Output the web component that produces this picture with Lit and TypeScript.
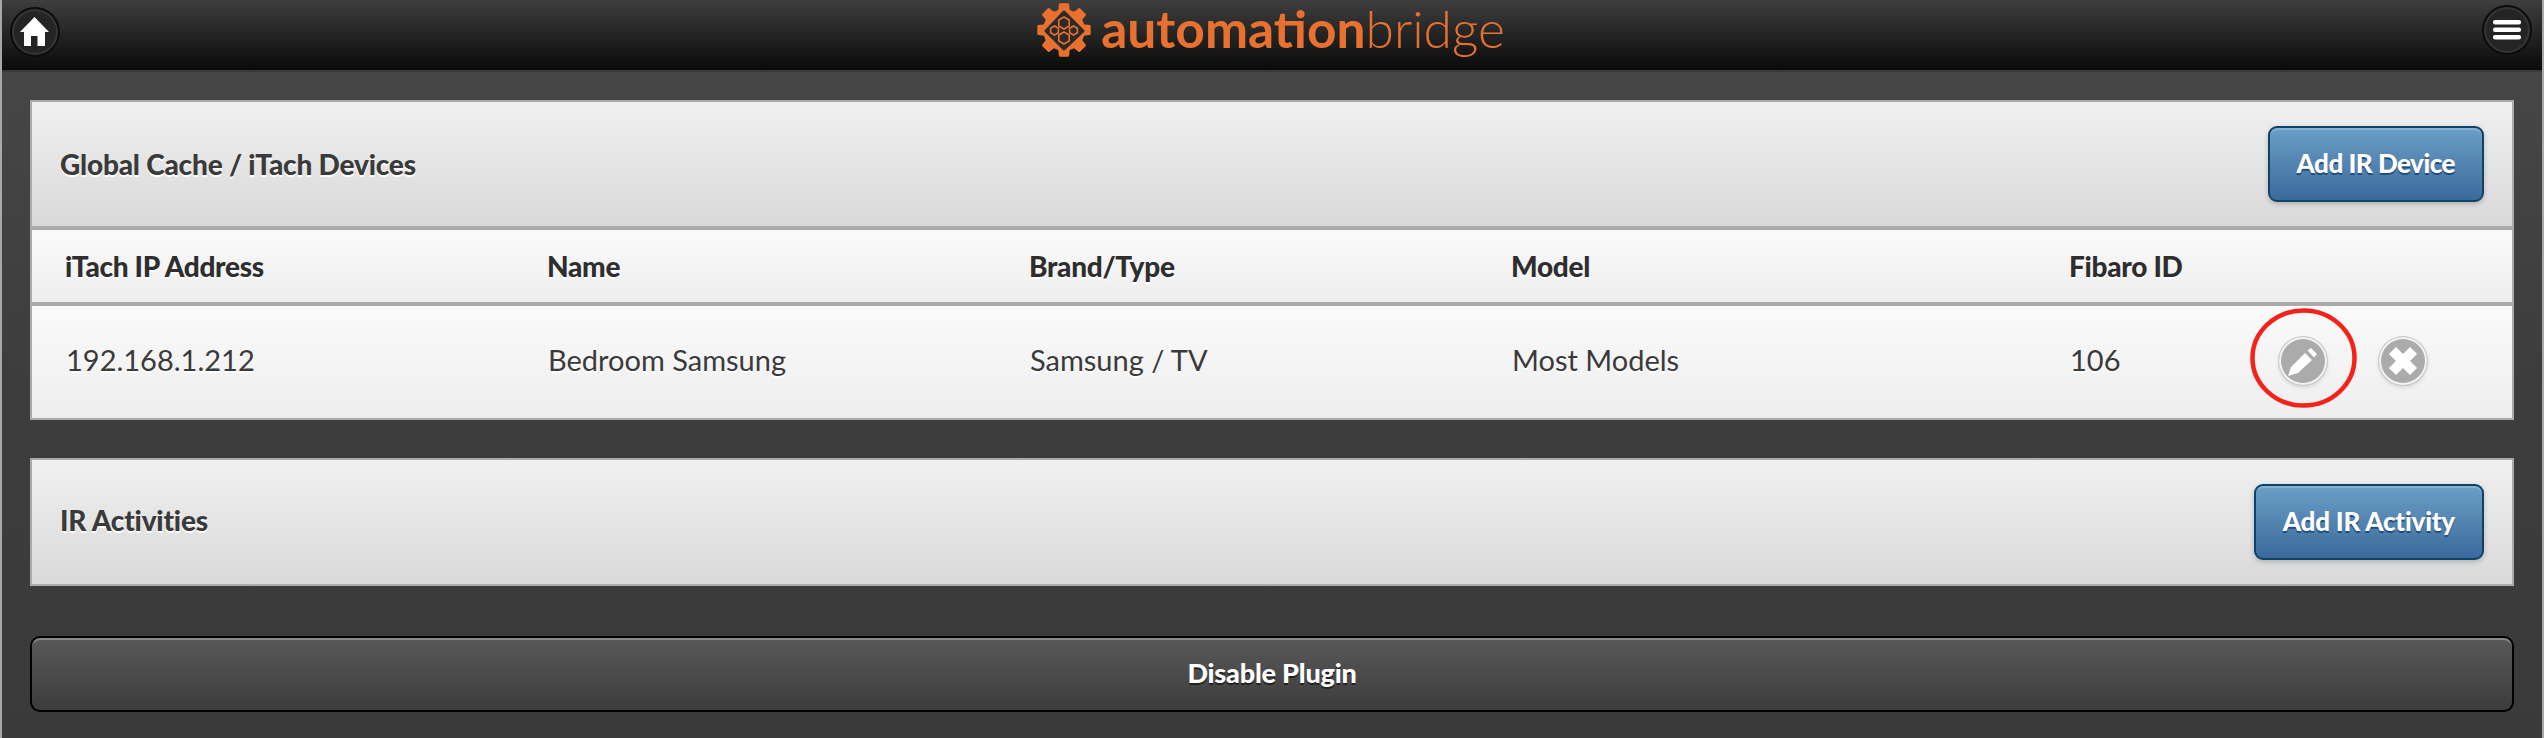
import { LitElement, html, css } from 'lit';
import { customElement } from 'lit/decorators.js';

// gear outline for the logo, 8 teeth
function gearPath(cx: number, cy: number, outer: number, inner: number, teeth: number) {
  const pts: string[] = [];
  const step = (Math.PI * 2) / teeth;
  for (let i = 0; i < teeth; i++) {
    const a = i * step - Math.PI / 2;
    const list: [number, number][] = [
      [a - step * 0.31, inner],
      [a - step * 0.2, outer],
      [a + step * 0.2, outer],
      [a + step * 0.31, inner],
    ];
    for (const [ang, r] of list) {
      pts.push(`${(cx + Math.cos(ang) * r).toFixed(2)} ${(cy + Math.sin(ang) * r).toFixed(2)}`);
    }
  }
  return 'M' + pts.join('L') + 'Z';
}

function hexPath(cx: number, cy: number, r: number) {
  const h = r * 0.87;
  return `M${cx} ${cy - r}L${cx + h} ${cy - r / 2}V${cy + r / 2}L${cx} ${cy + r}L${cx - h} ${cy + r / 2}V${cy - r / 2}Z`;
}

const columns = ['iTach IP Address', 'Name', 'Brand/Type', 'Model', 'Fibaro ID', ''];
const device = ['192.168.1.212', 'Bedroom Samsung', 'Samsung / TV', 'Most Models', '106'];

@customElement('app-root')
export class AppRoot extends LitElement {
  static styles = css`
    :host {
      display: block;
      width: 2544px;
      height: 738px;
      overflow: hidden;
      box-sizing: border-box;
      border-left: 2px solid #a8a8a8;
      border-right: 2px solid #a8a8a8;
      font-family: "Lato", "Open Sans", sans-serif;
      background: #3c3c3c;
    }

    .topbar {
      height: 72px;
      box-sizing: border-box;
      border-bottom: 2px solid #3a3a3a;
      background: linear-gradient(180deg, #3e3e3e 0%, #0a0a0a 100%);
      display: flex;
      align-items: center;
      justify-content: space-between;
      padding: 0 10px 6px 8px;
    }

    .round {
      width: 50px;
      height: 50px;
      box-sizing: border-box;
      border-radius: 50%;
      background: #242424;
      border: 2px solid #0d0d0d;
      box-shadow: inset 0 0 0 2px #363636;
      display: flex;
      align-items: center;
      justify-content: center;
    }

    .round.menu {
      margin-top: -4px;
    }

    .logo {
      display: flex;
      align-items: center;
      gap: 10px;
      color: #e87130;
      font-size: 51.5px;
      line-height: 52px;
      margin: -4px 0 0 0;
    }

    .logo svg {
      display: block;
    }

    .logo .word {
      margin-bottom: 5px;
    }

    .logo b {
      font-weight: 700;
    }

    .logo span {
      font-weight: 300;
    }

    .content {
      height: 666px;
      box-sizing: border-box;
      padding: 28px 28px 0 28px;
      background: linear-gradient(180deg, #464646 0%, #3d3d3d 45%, #3a3a3a 100%);
      display: flex;
      flex-direction: column;
    }

    .panel {
      border: 2px solid #aaa;
      color: #3a3a3a;
      margin-bottom: 38px;
    }

    .panel-head {
      display: flex;
      align-items: center;
      justify-content: space-between;
      padding: 0 28px;
      height: 124px;
      background: linear-gradient(180deg, #f0f0f0 0%, #d9d9d9 100%);
      font-size: 28px;
      font-weight: 900;
      letter-spacing: -0.2px;
      text-shadow: 0 2px 0 #fff;
    }

    .panel-head .lift {
      margin-bottom: 4px;
    }

    .add {
      height: 76px;
      box-sizing: border-box;
      padding: 0 27px 3px;
      border: 2px solid #0c4468;
      border-radius: 9px;
      background: linear-gradient(180deg, #6a9fc6 0%, #3c699b 100%);
      box-shadow: inset 0 2px 0 rgba(255, 255, 255, 0.2), 0 2px 5px rgba(0, 0, 0, 0.2);
      color: #fff;
      font-family: inherit;
      font-size: 26px;
      font-weight: 900;
      letter-spacing: -0.5px;
      text-shadow: 0 2px 0 #1f4d7c;
    }

    .add.wide {
      letter-spacing: -0.2px;
    }

    .row {
      display: grid;
      grid-template-columns: 482px 482px 482px 558px 210px 1fr;
      align-items: center;
      padding-left: 33px;
    }

    .row.heads {
      height: 72px;
      border-top: 4px solid #aaa;
      border-bottom: 4px solid #aaa;
      background: linear-gradient(180deg, #fafafa 0%, #eee 100%);
      font-size: 28px;
      font-weight: 900;
      letter-spacing: -0.3px;
      color: #2e2e2e;
      text-shadow: 0 2px 0 #fff;
    }

    .row.data {
      height: 112px;
      background: linear-gradient(180deg, #fafafa 0%, #eee 100%);
      font-size: 29px;
      color: #3a3a3a;
      text-shadow: 0 2px 0 #fff;
    }

    .row.data > div {
      padding: 0 0 5px 1px;
    }

    .disable {
      height: 76px;
      margin-top: 12px;
      padding-bottom: 4px;
      box-sizing: border-box;
      border: 2px solid #000;
      border-radius: 10px;
      background: linear-gradient(180deg, #595959 0%, #3c3c3c 100%);
      box-shadow: inset 0 3px 0 -1px #8a8a8a;
      color: #fff;
      font-family: inherit;
      font-size: 27px;
      font-weight: 900;
      letter-spacing: -0.2px;
      text-shadow: 0 2px 0 #222;
    }

    .row.data > .actions {
      position: relative;
      display: flex;
      gap: 52px;
      margin-top: -2px;
      padding: 0;
    }

    .act {
      width: 48px;
      height: 48px;
      flex: none;
      border-radius: 50%;
      background: #ababab;
      box-shadow: inset 0 0 0 2px #f4f4f4, 0 0 0 1px #c8c8c8, 0 2px 4px rgba(0, 0, 0, 0.15);
    }

    .act svg {
      display: block;
    }

    .ring {
      position: absolute;
      left: -29px;
      top: -29px;
      pointer-events: none;
    }
  `;

  render() {
    return html`
      <div class="topbar">
        <div class="round">
          <svg width="30" height="30" viewBox="0 0 30 30"><path fill="#fff" d="M14.5 0 L29 15 L25 15 L25 29 L17.5 29 L17.5 19 L11 19 L11 29 L4 29 L4 15 L0 15 Z"/></svg>
        </div>
        <div class="logo">
          <svg width="54" height="54" viewBox="0 0 54 54">
            <path fill="#e87130" stroke="#e87130" stroke-width="2" stroke-linejoin="round" d=${gearPath(27, 27, 26, 20, 8)}/>
            <path fill="#2a2a2a" stroke="#2a2a2a" stroke-width="3" stroke-linejoin="round" d="M27 9 L46 28 L27 46 L9 28 Z"/>
            <g fill="#2a2a2a" stroke="#e87130" stroke-width="1.6">
              <path d=${hexPath(17.5, 27.5, 4.5)}/>
              <path d=${hexPath(36.5, 27.5, 4.5)}/>
              <path d=${hexPath(27, 20, 6)}/>
              <path d=${hexPath(27, 35, 6)}/>
            </g>
          </svg>
          <div class="word"><b>automation</b><span>bridge</span></div>
        </div>
        <div class="round menu">
          <svg width="28" height="20" viewBox="0 0 28 20"><g fill="#fff"><rect y="0" width="28" height="4.5" rx="2"/><rect y="7.5" width="28" height="4.5" rx="2"/><rect y="15" width="28" height="4.5" rx="2"/></g></svg>
        </div>
      </div>
      <div class="content">
        <div class="panel">
          <div class="panel-head">
            <span>Global Cache / iTach Devices</span>
            <button class="add">Add IR Device</button>
          </div>
          <div class="row heads">${columns.map((c) => html`<div>${c}</div>`)}</div>
          <div class="row data">
            ${device.map((c) => html`<div>${c}</div>`)}
            <div class="actions">
              <div class="act">
                <svg width="48" height="48" viewBox="0 0 48 48"><path fill="#fff" d="M9 39 L12 30 L26 16 L33 23 L19 36 Z M28.5 13.5 L32 11 L38 17 L35 20.5 Z"/></svg>
              </div>
              <div class="act">
                <svg width="48" height="48" viewBox="0 0 48 48"><g stroke="#fff" stroke-width="10" stroke-linecap="square"><line x1="17" y1="17" x2="31" y2="31"/><line x1="31" y1="17" x2="17" y2="31"/></g></svg>
              </div>
              <svg class="ring" width="107" height="100" viewBox="0 0 107 100"><ellipse cx="53.5" cy="50" rx="51" ry="47.5" fill="none" stroke="#f5221a" stroke-width="4.5"/></svg>
            </div>
          </div>
        </div>
        <div class="panel">
          <div class="panel-head">
            <span class="lift">IR Activities</span>
            <button class="add wide">Add IR Activity</button>
          </div>
        </div>
        <button class="disable">Disable Plugin</button>
      </div>
    `;
  }
}
